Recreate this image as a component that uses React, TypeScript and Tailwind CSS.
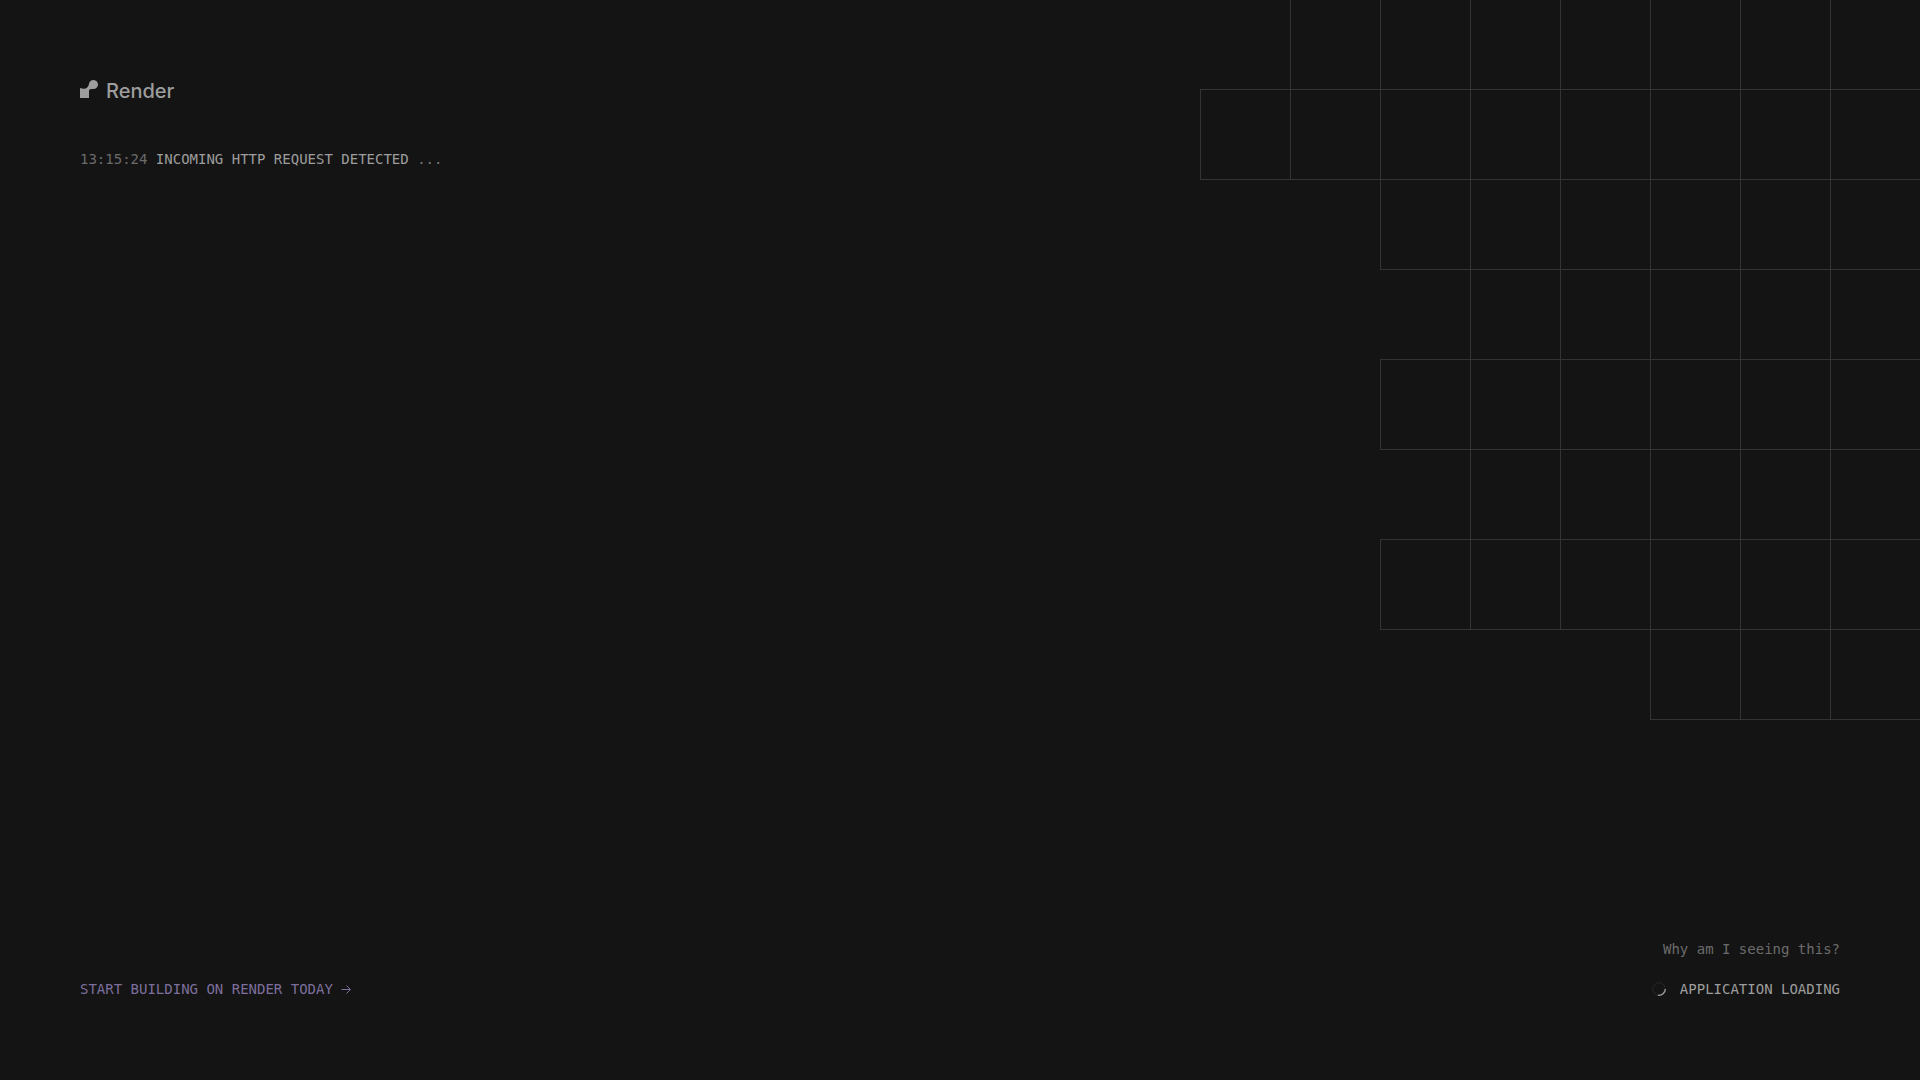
// number of cells in each row, counted from the right edge
const gridRows = [7, 8, 6, 5, 6, 5, 6, 3];

function BackgroundGrid() {
  return (
    <div
      aria-hidden="true"
      className="absolute top-0 right-0 max-w-full overflow-hidden pl-px"
    >
      {gridRows.map((cells, row) => (
        <div key={row} className="-mt-px -mr-px flex justify-end">
          {Array.from({ length: cells }, (_, cell) => (
            <div
              key={cell}
              className="-ml-px size-[91px] shrink-0 border border-[#343434]"
            />
          ))}
        </div>
      ))}
    </div>
  );
}

function Logo() {
  return (
    <a
      href="/"
      className="flex items-start gap-2 self-start text-[#9d9d9d]"
    >
      <svg
        className="size-[18px]"
        viewBox="0 0 18 18"
        fill="currentColor"
        aria-hidden="true"
      >
        <path d="M13.7 0C11.3 -0.1 9.3 1.6 9 3.8L8.9 4.3C8.5 6.8 6.5 8.8 4 8.8C2.5 8.8 1.1 8.6 0 8V18H9V11.2C9 9.8 10 9 11.2 9H13.5C16 9 18.1 6.9 18 4.3C17.9 2 16 0.1 13.7 0Z" />
      </svg>
      <span className="font-[Inter,sans-serif] text-xl leading-[22px] font-medium">
        Render
      </span>
    </a>
  );
}

function Spinner() {
  return (
    <svg
      className="size-[18px]"
      viewBox="0 0 16 16"
      fill="none"
      aria-hidden="true"
    >
      <circle cx="8" cy="8" r="5.6" stroke="#252525" />
      <path
        d="M13.6 8A5.6 5.6 0 0 1 7 13.5"
        stroke="#9d9d9d"
        strokeWidth="1.2"
      />
    </svg>
  );
}

function ArrowRight() {
  return (
    <svg
      className="size-[10px]"
      viewBox="0 0 10 10"
      fill="none"
      stroke="currentColor"
      aria-hidden="true"
    >
      <path d="M0.5 5.5H9M5.5 1.5L9.5 5.5L5.5 9.5" />
    </svg>
  );
}

export default function App() {
  return (
    <div className="relative min-h-screen overflow-hidden bg-[#141414]">
      <BackgroundGrid />
      <main className="relative flex min-h-screen flex-col justify-between p-20 pb-[81px] font-['DejaVu_Sans_Mono',monospace] text-sm text-[#9d9d9d]">
        <div className="flex flex-col gap-[47px]">
          <Logo />
          <p>
            <time className="text-[#6b6b6b]">13:15:24</time> INCOMING HTTP
            REQUEST DETECTED <span className="text-[#777777]">...</span>
          </p>
        </div>
        <div className="flex items-end justify-between">
          <a
            href="/register"
            className="flex items-center gap-2 text-[#7d6f9c]"
          >
            START BUILDING ON RENDER TODAY
            <ArrowRight />
          </a>
          <div className="flex flex-col items-end gap-5">
            <a href="/docs" className="text-[#6b6b6b]">
              Why am I seeing this?
            </a>
            <div role="status" className="flex items-center gap-3">
              <Spinner />
              <span>APPLICATION LOADING</span>
            </div>
          </div>
        </div>
      </main>
    </div>
  );
}
